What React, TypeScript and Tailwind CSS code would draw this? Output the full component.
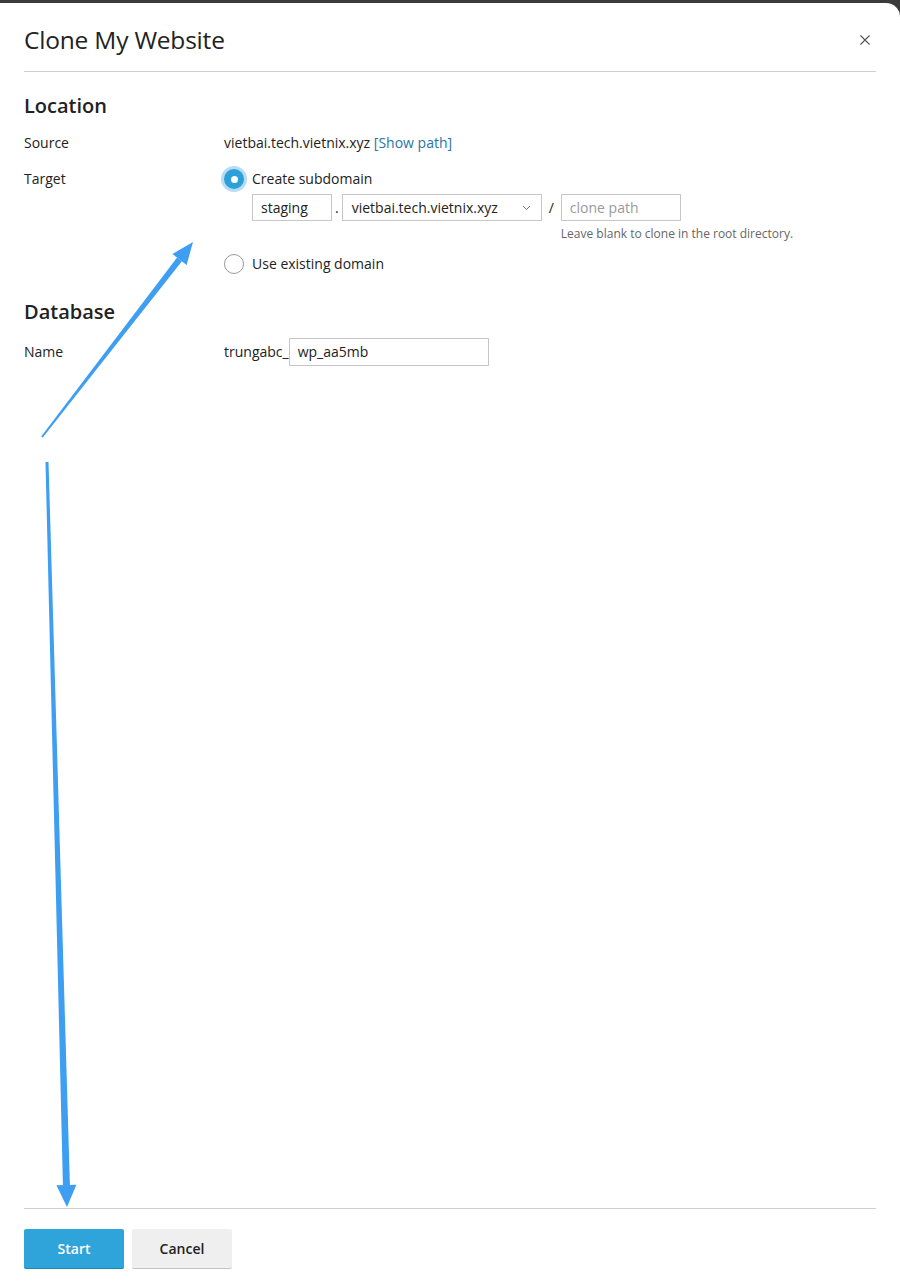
import React from "react";

function Radio({ checked }: { checked?: boolean }) {
  return checked ? (
    <span className="flex h-5 w-5 items-center justify-center rounded-full bg-[#2d9fd9] ring-[3px] ring-[#b7dcf3]">
      <span className="h-[7px] w-[7px] rounded-full bg-white" />
    </span>
  ) : (
    <span className="h-5 w-5 rounded-full border border-[#9a9a9a] bg-white" />
  );
}

export default function App() {
  return (
    <div
      className="relative min-h-[1285px] bg-[#3b3b3b] pt-[3px] text-[#222]"
      style={{ fontFamily: '"Open Sans", "Noto Sans", sans-serif' }}
    >
      <div className="flex min-h-[1282px] flex-col rounded-tr-[14px] bg-white px-6">
        {/* Header */}
        <div className="flex items-center justify-between border-b border-[#cfcfcf] pb-[15px] pt-[21px]">
          <h1 className="text-[24.5px] leading-8 font-normal tracking-[-0.2px] text-[#222]">
            Clone My Website
          </h1>
          <button className="mr-[6px] text-[#555]">
            <svg width="10" height="10" viewBox="0 0 10 10" fill="none" stroke="currentColor" strokeWidth="1.1">
              <path d="M0.5 0.5l9 9M9.5 0.5l-9 9" />
            </svg>
          </button>
        </div>

        {/* Location */}
        <h2 className="mt-5 text-[20px] leading-7 font-semibold text-[#222]">Location</h2>
        <div className="mt-[13px] grid grid-cols-[200px_1fr] text-[14px] leading-5">
          <div>Source</div>
          <div>
            vietbai.tech.vietnix.xyz{" "}
            <a className="text-[#2775a8]">[Show path]</a>
          </div>

          <div className="mt-4">Target</div>
          <div className="mt-4">
            <div className="flex items-center gap-2">
              <Radio checked />
              <span>Create subdomain</span>
            </div>
            <div className="ml-7 mt-[5px] flex items-start">
              <div className="flex h-[27px] w-[80px] items-center border border-[#c6c6c6] px-2">staging</div>
              <span className="flex h-[27px] items-center px-[3px]">.</span>
              <div className="flex h-[27px] w-[200px] items-center justify-between border border-[#c6c6c6] pl-[9px] pr-[10px]">
                <span>vietbai.tech.vietnix.xyz</span>
                <svg width="9" height="6" viewBox="0 0 9 6" fill="none" stroke="#777" strokeWidth="1">
                  <path d="M1 1l3.5 3.5L8 1" />
                </svg>
              </div>
              <span className="flex h-[27px] items-center px-[7px]">/</span>
              <div className="flex flex-col">
                <div className="flex h-[27px] w-[120px] items-center border border-[#c6c6c6] px-2 text-[#9a9a9a]">
                  clone path
                </div>
                <div className="mt-[5px] whitespace-nowrap text-[12px] leading-4 text-[#666]">
                  Leave blank to clone in the root directory.
                </div>
              </div>
            </div>
            <div className="mt-3 flex items-center gap-2">
              <Radio />
              <span>Use existing domain</span>
            </div>
          </div>
        </div>

        {/* Database */}
        <h2 className="mt-[24px] text-[20px] leading-7 font-semibold text-[#222]">Database</h2>
        <div className="mt-[12px] grid grid-cols-[200px_1fr] text-[14px] leading-5">
          <div className="self-center">Name</div>
          <div className="flex items-center">
            <span>trungabc_</span>
            <div className="flex h-[28px] w-[200px] items-center border border-[#c6c6c6] px-2">wp_aa5mb</div>
          </div>
        </div>

        <div className="flex-1" />

        {/* Footer */}
        <div className="flex gap-2 border-t border-[#cfcfcf] pb-[16px] pt-5">
          <button className="h-10 w-[100px] rounded-[2px] border-b border-[#1f86b8] bg-[#2fa4db] text-[14px] font-semibold text-white">
            Start
          </button>
          <button className="h-10 w-[100px] rounded-[2px] border-b border-[#c4c4c4] bg-[#efeff0] text-[14px] font-semibold text-[#222]">
            Cancel
          </button>
        </div>
      </div>

      {/* annotation arrows */}
      <svg className="pointer-events-none absolute left-0 top-0" width="900" height="1285">
        <polygon
          fill="#3d9ef2"
          points="41.2,436.4 42.8,437.6 181.9,261.2 177.1,257.6"
        />
        <polygon fill="#3d9ef2" points="193,242 186.6,264.9 172.4,253.9" />
        <polygon
          fill="#3d9ef2"
          points="45.5,462 48.5,462 69.9,1185.1 62.9,1184.9"
        />
        <polygon fill="#3d9ef2" points="67,1207 76.4,1184.7 56.4,1185.3" />
      </svg>
    </div>
  );
}
